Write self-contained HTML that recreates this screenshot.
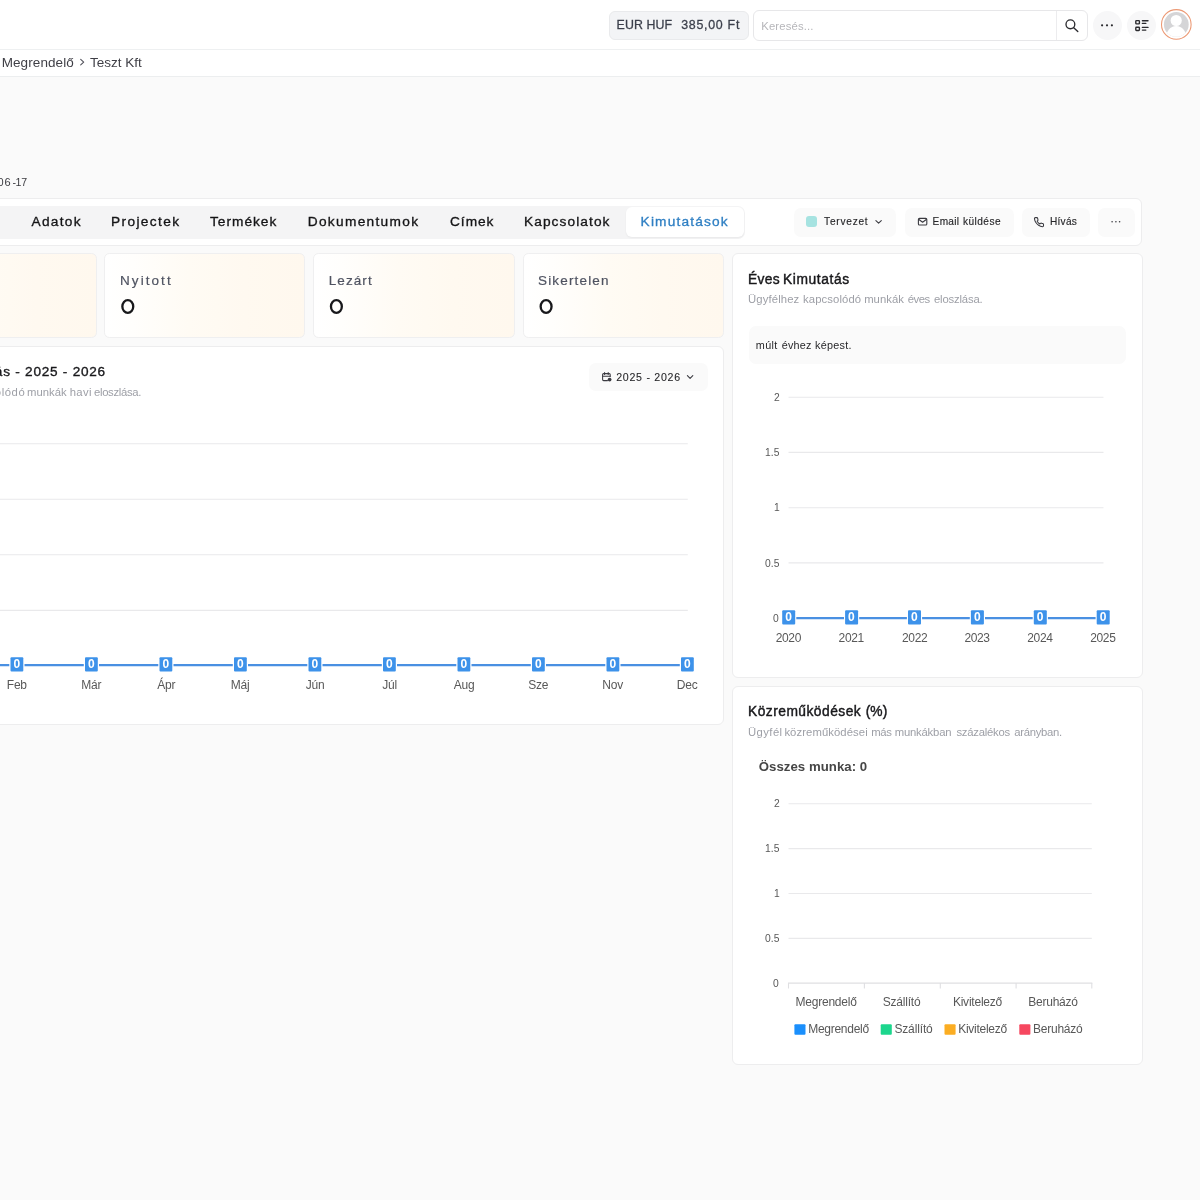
<!DOCTYPE html>
<html lang="hu">
<head>
<meta charset="utf-8">
<title>Teszt Kft</title>
<style>
*{box-sizing:border-box;margin:0;padding:0}
html,body{width:1200px;height:1200px;overflow:hidden;background:#fafafa;font-family:"Liberation Sans",sans-serif;color:#18181b}
.abs{position:absolute}
.t{position:absolute;white-space:nowrap;line-height:1}
#tx{position:absolute;left:0;top:0;width:1200px;height:1200px;will-change:transform}
#hdr{left:0;top:0;width:1200px;height:49.6px;background:#fff;border-bottom:1px solid #eef0f1}
#crumb{left:0;top:49.6px;width:1200px;height:27.6px;background:#fff;border-bottom:1px solid #eceeef}
.card{position:absolute;background:#fff;border:1px solid #ededee;border-radius:6px}
.stat{position:absolute;border:1px solid #efeff0;border-radius:5.5px;background:linear-gradient(90deg,#ffffff 0%,#fffefc 14%,#fffbf4 42%,#fff9f0 70%,#fff8ee 100%)}
.btn{position:absolute;background:#fafafa;border-radius:7px}
#ov{position:absolute;left:0;top:0;width:1200px;height:1200px}
</style>
</head>
<body>
<div id="hdr" class="abs"></div>
<div id="crumb" class="abs"></div>
<!-- header widgets -->
<div class="abs" style="left:608.5px;top:11px;width:140px;height:28.5px;background:#f3f4f6;border:1px solid #e9eaec;border-radius:6px"></div>
<div class="abs" style="left:753px;top:10px;width:334.5px;height:30.5px;background:#fff;border:1px solid #e7e7e9;border-radius:6px"></div>
<div class="abs" style="left:1056px;top:11px;width:1px;height:28.5px;background:#ececee"></div>
<div class="abs" style="left:1092.5px;top:10.8px;width:29px;height:29px;border-radius:50%;background:#f7f7f8"></div>
<div class="abs" style="left:1127px;top:10.8px;width:29px;height:29px;border-radius:50%;background:#f7f7f8"></div>

<!-- tabs bar -->
<div class="card" style="left:-40px;top:198px;width:1182px;height:48px"></div>
<div class="abs" style="left:-30px;top:205.5px;width:775px;height:33.5px;background:#f4f4f5;border-radius:7px"></div>
<div class="abs" style="left:625.7px;top:207px;width:118px;height:30px;background:#fff;border-radius:6px;box-shadow:0 1px 2px rgba(0,0,0,.05)"></div>
<div class="btn" style="left:794px;top:208px;width:102px;height:28.5px"></div>
<div class="btn" style="left:904.5px;top:208px;width:109px;height:28.5px"></div>
<div class="btn" style="left:1022px;top:208px;width:68.3px;height:28.5px"></div>
<div class="btn" style="left:1098px;top:208px;width:36.5px;height:28.5px"></div>
<div class="abs" style="left:806px;top:216.2px;width:11.2px;height:11.2px;border-radius:3px;background:#a6e3e1"></div>

<!-- stat cards -->
<div class="stat" style="left:-104px;top:253.2px;width:201px;height:84.8px"></div>
<div class="stat" style="left:104px;top:253.2px;width:201px;height:84.8px"></div>
<div class="stat" style="left:313px;top:253.2px;width:201.5px;height:84.8px"></div>
<div class="stat" style="left:523px;top:253.2px;width:201px;height:84.8px"></div>

<!-- cards -->
<div class="card" style="left:-40px;top:346px;width:764px;height:379px"></div>
<div class="card" style="left:732px;top:253px;width:410.5px;height:425px"></div>
<div class="card" style="left:732px;top:686px;width:410.5px;height:379px"></div>
<div class="btn" style="left:589px;top:363px;width:119px;height:27.5px"></div>
<div class="abs" style="left:748.5px;top:326px;width:377.5px;height:38px;background:#fafafa;border-radius:7px"></div>

<svg id="ov" viewBox="0 0 1200 1200" fill="none">
<line x1="-60" x2="687.8" y1="443.8" y2="443.8" stroke="#e9e9eb" stroke-width="1.1"/>
<line x1="-60" x2="687.8" y1="499.3" y2="499.3" stroke="#e9e9eb" stroke-width="1.1"/>
<line x1="-60" x2="687.8" y1="554.8" y2="554.8" stroke="#e9e9eb" stroke-width="1.1"/>
<line x1="-60" x2="687.8" y1="610.4" y2="610.4" stroke="#e9e9eb" stroke-width="1.1"/>
<line x1="-60" x2="687.4" y1="665.2" y2="665.2" stroke="#4a90e2" stroke-width="2.25"/>
<rect x="-65.2" y="656.2" width="15.2" height="16.4" rx="2" fill="#fff"/>
<rect x="-64.0" y="657.2" width="12.8" height="14.2" rx="1" fill="#3d92ea"/>
<rect x="9.3" y="656.2" width="15.2" height="16.4" rx="2" fill="#fff"/>
<rect x="10.5" y="657.2" width="12.8" height="14.2" rx="1" fill="#3d92ea"/>
<rect x="83.8" y="656.2" width="15.2" height="16.4" rx="2" fill="#fff"/>
<rect x="85.0" y="657.2" width="12.8" height="14.2" rx="1" fill="#3d92ea"/>
<rect x="158.3" y="656.2" width="15.2" height="16.4" rx="2" fill="#fff"/>
<rect x="159.5" y="657.2" width="12.8" height="14.2" rx="1" fill="#3d92ea"/>
<rect x="232.8" y="656.2" width="15.2" height="16.4" rx="2" fill="#fff"/>
<rect x="234.0" y="657.2" width="12.8" height="14.2" rx="1" fill="#3d92ea"/>
<rect x="307.3" y="656.2" width="15.2" height="16.4" rx="2" fill="#fff"/>
<rect x="308.5" y="657.2" width="12.8" height="14.2" rx="1" fill="#3d92ea"/>
<rect x="381.8" y="656.2" width="15.2" height="16.4" rx="2" fill="#fff"/>
<rect x="383.0" y="657.2" width="12.8" height="14.2" rx="1" fill="#3d92ea"/>
<rect x="456.3" y="656.2" width="15.2" height="16.4" rx="2" fill="#fff"/>
<rect x="457.5" y="657.2" width="12.8" height="14.2" rx="1" fill="#3d92ea"/>
<rect x="530.8" y="656.2" width="15.2" height="16.4" rx="2" fill="#fff"/>
<rect x="532.0" y="657.2" width="12.8" height="14.2" rx="1" fill="#3d92ea"/>
<rect x="605.3" y="656.2" width="15.2" height="16.4" rx="2" fill="#fff"/>
<rect x="606.5" y="657.2" width="12.8" height="14.2" rx="1" fill="#3d92ea"/>
<rect x="679.8" y="656.2" width="15.2" height="16.4" rx="2" fill="#fff"/>
<rect x="681.0" y="657.2" width="12.8" height="14.2" rx="1" fill="#3d92ea"/>
<line x1="788.5" x2="1103.5" y1="397.2" y2="397.2" stroke="#e9e9eb" stroke-width="1.1"/>
<line x1="788.5" x2="1103.5" y1="452.4" y2="452.4" stroke="#e9e9eb" stroke-width="1.1"/>
<line x1="788.5" x2="1103.5" y1="507.7" y2="507.7" stroke="#e9e9eb" stroke-width="1.1"/>
<line x1="788.5" x2="1103.5" y1="562.9" y2="562.9" stroke="#e9e9eb" stroke-width="1.1"/>
<line x1="788.7" x2="1103.2" y1="618.1" y2="618.1" stroke="#4a90e2" stroke-width="2.25"/>
<rect x="781.1" y="609.2" width="15.2" height="16.4" rx="2" fill="#fff"/>
<rect x="782.2" y="610.2" width="13" height="14.2" rx="1" fill="#3d92ea"/>
<rect x="844.0" y="609.2" width="15.2" height="16.4" rx="2" fill="#fff"/>
<rect x="845.1" y="610.2" width="13" height="14.2" rx="1" fill="#3d92ea"/>
<rect x="906.9" y="609.2" width="15.2" height="16.4" rx="2" fill="#fff"/>
<rect x="908.0" y="610.2" width="13" height="14.2" rx="1" fill="#3d92ea"/>
<rect x="969.8" y="609.2" width="15.2" height="16.4" rx="2" fill="#fff"/>
<rect x="970.9" y="610.2" width="13" height="14.2" rx="1" fill="#3d92ea"/>
<rect x="1032.7" y="609.2" width="15.2" height="16.4" rx="2" fill="#fff"/>
<rect x="1033.8" y="610.2" width="13" height="14.2" rx="1" fill="#3d92ea"/>
<rect x="1095.6" y="609.2" width="15.2" height="16.4" rx="2" fill="#fff"/>
<rect x="1096.7" y="610.2" width="13" height="14.2" rx="1" fill="#3d92ea"/>
<line x1="788.5" x2="1091.8" y1="803.7" y2="803.7" stroke="#e9e9eb" stroke-width="1.1"/>
<line x1="788.5" x2="1091.8" y1="848.6" y2="848.6" stroke="#e9e9eb" stroke-width="1.1"/>
<line x1="788.5" x2="1091.8" y1="893.5" y2="893.5" stroke="#e9e9eb" stroke-width="1.1"/>
<line x1="788.5" x2="1091.8" y1="938.4" y2="938.4" stroke="#e9e9eb" stroke-width="1.1"/>
<line x1="788" x2="1092.3" y1="983.1" y2="983.1" stroke="#dfdfe2" stroke-width="1.1"/>
<line x1="788.5" x2="788.5" y1="983.1" y2="988.5" stroke="#dfdfe2" stroke-width="1.1"/>
<line x1="864.4" x2="864.4" y1="983.1" y2="988.5" stroke="#dfdfe2" stroke-width="1.1"/>
<line x1="940.3" x2="940.3" y1="983.1" y2="988.5" stroke="#dfdfe2" stroke-width="1.1"/>
<line x1="1016.1" x2="1016.1" y1="983.1" y2="988.5" stroke="#dfdfe2" stroke-width="1.1"/>
<line x1="1091.8" x2="1091.8" y1="983.1" y2="988.5" stroke="#dfdfe2" stroke-width="1.1"/>
<rect x="794.4" y="1024.2" width="11.1" height="10.6" rx="1" fill="#1a8ffc"/>
<rect x="880.7" y="1024.2" width="11.1" height="10.6" rx="1" fill="#1cd68d"/>
<rect x="944.5" y="1024.2" width="11.1" height="10.6" rx="1" fill="#fbad22"/>
<rect x="1019.3" y="1024.2" width="11.1" height="10.6" rx="1" fill="#f6475f"/>
<ellipse cx="127.8" cy="306.5" rx="5.45" ry="6.45" stroke="#18181b" stroke-width="2.3"/>
<ellipse cx="336.4" cy="306.5" rx="5.45" ry="6.45" stroke="#18181b" stroke-width="2.3"/>
<ellipse cx="546.1" cy="306.5" rx="5.45" ry="6.45" stroke="#18181b" stroke-width="2.3"/>
<path d="M80.7 59.3 L83.7 62.1 L80.7 64.9" stroke="#52525b" stroke-width="1.1" stroke-linecap="round" stroke-linejoin="round"/>
<circle cx="1070.4" cy="24.3" r="4.4" stroke="#2b2b2f" stroke-width="1.35"/><path d="M1073.7 27.7 L1077.8 31.6" stroke="#2b2b2f" stroke-width="1.35" stroke-linecap="round"/>
<circle cx="1102.1" cy="25.3" r="1.1" fill="#2b2b2f"/>
<circle cx="1107" cy="25.3" r="1.1" fill="#2b2b2f"/>
<circle cx="1111.9" cy="25.3" r="1.1" fill="#2b2b2f"/>
<g stroke="#2b2b2f" stroke-width="1.4" stroke-linecap="round"><rect x="1135.8" y="20.6" width="3.6" height="3.3" rx=".7"/><rect x="1135.8" y="27.2" width="3.6" height="3.3" rx=".7"/><path d="M1142.4 20.7 H1148 M1142.4 23.4 H1145.8 M1142.4 27.4 H1148 M1142.4 30.1 H1145.8"/></g>
<circle cx="1176.3" cy="24.4" r="14.8" fill="#fff" stroke="#ec9873" stroke-width="1.05"/>
<clipPath id="av"><circle cx="1176.3" cy="24.4" r="12.4"/></clipPath>
<g clip-path="url(#av)"><rect x="1160" y="10" width="34" height="30" fill="#d5d5d7"/><circle cx="1176.2" cy="20.5" r="5.6" fill="#fff"/><ellipse cx="1176.2" cy="38.3" rx="10.6" ry="12.2" fill="#fff"/></g>
<path d="M875.9 220.6 L878.6 223.2 L881.3 220.6" stroke="#3a3a40" stroke-width="1.1" stroke-linecap="round" stroke-linejoin="round"/>
<rect x="918.4" y="218.4" width="8.4" height="6.6" rx="1.1" stroke="#3a3a40" stroke-width="1.1"/><path d="M918.6 219.3 L922.6 222.2 L926.6 219.3" stroke="#3a3a40" stroke-width="1.1" stroke-linejoin="round"/>
<g transform="translate(1033.5 216.7) scale(0.455)" stroke="#3a3a40" stroke-width="2.3" stroke-linecap="round" stroke-linejoin="round"><path d="M22 16.92v3a2 2 0 0 1-2.18 2 19.79 19.79 0 0 1-8.63-3.07 19.5 19.5 0 0 1-6-6 19.79 19.79 0 0 1-3.07-8.67A2 2 0 0 1 4.11 2h3a2 2 0 0 1 2 1.72 12.84 12.84 0 0 0 .7 2.81 2 2 0 0 1-.45 2.11L8.09 9.91a16 16 0 0 0 6 6l1.27-1.27a2 2 0 0 1 2.11-.45 12.84 12.84 0 0 0 2.81.7A2 2 0 0 1 22 16.92z"/></g>
<circle cx="1112.1" cy="221.8" r=".8" fill="#3a3a40"/>
<circle cx="1115.9" cy="221.8" r=".8" fill="#3a3a40"/>
<circle cx="1119.6" cy="221.8" r=".8" fill="#3a3a40"/>
<g stroke="#3a3a40" stroke-width="1.05" stroke-linecap="round"><path d="M607.5 380.6 H603.6 a1 1 0 0 1 -1 -1 V374.6 a1 1 0 0 1 1 -1 H609.2 a1 1 0 0 1 1 1 V376.6"/><path d="M604.6 372.4 V374.4 M608.2 372.4 V374.4 M602.8 376.3 H610"/></g><circle cx="609.6" cy="379.6" r="1.9" fill="#3a3a40"/>
<path d="M687.4 375.7 L690.1 378.3 L692.8 375.7" stroke="#3a3a40" stroke-width="1.1" stroke-linecap="round" stroke-linejoin="round"/>
</svg>
<div id="tx">
<span class="t" id="t0" style="left:616.60px;top:19.20px;font-size:12.4px;color:#3b3f4b;letter-spacing:0.067px;-webkit-text-stroke:0.28px #3b3f4b;">EUR HUF</span>
<span class="t" id="t1" style="left:681.20px;top:19.20px;font-size:12.4px;color:#3b3f4b;letter-spacing:0.725px;-webkit-text-stroke:0.28px #3b3f4b;">385,00 Ft</span>
<span class="t" id="t2" style="left:761.20px;top:21.00px;font-size:11.3px;color:#b6b6ba;letter-spacing:0.156px;">Keresés...</span>
<span class="t" id="t3" style="left:1.70px;top:55.60px;font-size:13.5px;color:#3f3f46;letter-spacing:0.089px;">Megrendelő</span>
<span class="t" id="t4" style="left:90.00px;top:55.60px;font-size:13.5px;color:#3f3f46;">Teszt Kft</span>
<span class="t" id="t5" style="left:4.50px;top:177.00px;font-size:11px;color:#3a3a3f;">6</span>
<span class="t" id="t6" style="left:12.50px;top:177.00px;font-size:10.6px;color:#3a3a3f;">-</span>
<span class="t" id="t7" style="left:15.50px;top:177.00px;font-size:10.6px;color:#3a3a3f;">1</span>
<span class="t" id="t8" style="left:21.30px;top:177.00px;font-size:10.6px;color:#3a3a3f;">7</span>
<span class="t" id="t9" style="left:-31.70px;top:177.00px;font-size:10.5px;color:#3a3a3f;letter-spacing:0.500px;">2025-0</span>
<span class="t" id="t10" style="left:31.50px;top:214.80px;font-size:13.7px;color:#141416;letter-spacing:1.300px;-webkit-text-stroke:0.33px #141416;">Adatok</span>
<span class="t" id="t11" style="left:111.00px;top:214.80px;font-size:13.7px;color:#141416;letter-spacing:1.375px;-webkit-text-stroke:0.33px #141416;">Projectek</span>
<span class="t" id="t12" style="left:210.00px;top:214.80px;font-size:13.7px;color:#141416;letter-spacing:1.000px;-webkit-text-stroke:0.33px #141416;">Termékek</span>
<span class="t" id="t13" style="left:307.70px;top:214.80px;font-size:13.7px;color:#141416;letter-spacing:1.318px;-webkit-text-stroke:0.33px #141416;">Dokumentumok</span>
<span class="t" id="t14" style="left:450.00px;top:214.80px;font-size:13.7px;color:#141416;letter-spacing:0.975px;-webkit-text-stroke:0.33px #141416;">Címek</span>
<span class="t" id="t15" style="left:524.00px;top:214.80px;font-size:13.7px;color:#141416;letter-spacing:1.090px;-webkit-text-stroke:0.33px #141416;">Kapcsolatok</span>
<span class="t" id="t16" style="left:640.60px;top:214.80px;font-size:13.7px;color:#2f7fc3;letter-spacing:1.170px;-webkit-text-stroke:0.33px #2f7fc3;">Kimutatások</span>
<span class="t" id="t17" style="left:824.10px;top:217.40px;font-size:10.1px;color:#27272a;letter-spacing:0.771px;-webkit-text-stroke:0.15px #27272a;">Tervezet</span>
<span class="t" id="t18" style="left:932.60px;top:217.30px;font-size:10.1px;color:#27272a;letter-spacing:0.300px;-webkit-text-stroke:0.15px #27272a;">Email</span>
<span class="t" id="t19" style="left:963.00px;top:217.30px;font-size:10.1px;color:#27272a;letter-spacing:0.450px;-webkit-text-stroke:0.15px #27272a;">küldése</span>
<span class="t" id="t20" style="left:1049.90px;top:217.20px;font-size:10.1px;color:#27272a;letter-spacing:0.300px;-webkit-text-stroke:0.15px #27272a;">Hívás</span>
<span class="t" id="t21" style="left:120.00px;top:273.60px;font-size:13.5px;color:#4f5361;letter-spacing:2.067px;-webkit-text-stroke:0.2px #4f5361;">Nyitott</span>
<span class="t" id="t22" style="left:328.70px;top:273.60px;font-size:13.5px;color:#4f5361;letter-spacing:1.100px;-webkit-text-stroke:0.2px #4f5361;">Lezárt</span>
<span class="t" id="t23" style="left:538.00px;top:273.60px;font-size:13.5px;color:#4f5361;letter-spacing:1.167px;-webkit-text-stroke:0.2px #4f5361;">Sikertelen</span>
<span class="t" id="t24" style="left:15.30px;top:365.30px;font-size:13.6px;color:#18181b;letter-spacing:0.750px;-webkit-text-stroke:0.35px #18181b;">- 2025 - 2026</span>
<span class="t" id="t25" style="left:-93.00px;top:365.30px;font-size:13.6px;color:#18181b;letter-spacing:0.900px;-webkit-text-stroke:0.35px #18181b;">Havi Kimutatás</span>
<span class="t" id="t26" style="left:27.00px;top:386.80px;font-size:11.3px;color:#9d9fa6;letter-spacing:0.020px;">munkák</span>
<span class="t" id="t27" style="left:69.70px;top:386.80px;font-size:11.3px;color:#9d9fa6;letter-spacing:0.333px;">havi</span>
<span class="t" id="t28" style="left:94.00px;top:386.80px;font-size:11.3px;color:#9d9fa6;letter-spacing:-0.322px;">eloszlása.</span>
<span class="t" id="t29" style="left:-96.30px;top:386.80px;font-size:11.3px;color:#9d9fa6;letter-spacing:0.550px;">Ügyfélhez kapcsolódó</span>
<span class="t" id="t30" style="left:616.20px;top:371.70px;font-size:10.6px;color:#27272a;letter-spacing:0.740px;-webkit-text-stroke:0.1px #27272a;">2025 - 2026</span>
<span class="t" id="t31" style="left:6.80px;top:678.70px;font-size:12px;color:#585858;letter-spacing:-0.220px;">Feb</span>
<span class="t" id="t32" style="left:13.40px;top:658.30px;font-size:12px;color:#fff;font-weight:700;">0</span>
<span class="t" id="t33" style="left:81.30px;top:678.70px;font-size:12px;color:#585858;letter-spacing:-0.220px;">Már</span>
<span class="t" id="t34" style="left:87.90px;top:658.30px;font-size:12px;color:#fff;font-weight:700;">0</span>
<span class="t" id="t35" style="left:157.30px;top:678.70px;font-size:12px;color:#585858;letter-spacing:-0.220px;">Ápr</span>
<span class="t" id="t36" style="left:162.40px;top:658.30px;font-size:12px;color:#fff;font-weight:700;">0</span>
<span class="t" id="t37" style="left:230.80px;top:678.70px;font-size:12px;color:#585858;letter-spacing:-0.220px;">Máj</span>
<span class="t" id="t38" style="left:236.90px;top:658.30px;font-size:12px;color:#fff;font-weight:700;">0</span>
<span class="t" id="t39" style="left:305.80px;top:678.70px;font-size:12px;color:#585858;letter-spacing:-0.220px;">Jún</span>
<span class="t" id="t40" style="left:311.40px;top:658.30px;font-size:12px;color:#fff;font-weight:700;">0</span>
<span class="t" id="t41" style="left:382.30px;top:678.70px;font-size:12px;color:#585858;letter-spacing:-0.220px;">Júl</span>
<span class="t" id="t42" style="left:385.90px;top:658.30px;font-size:12px;color:#fff;font-weight:700;">0</span>
<span class="t" id="t43" style="left:453.80px;top:678.70px;font-size:12px;color:#585858;letter-spacing:-0.220px;">Aug</span>
<span class="t" id="t44" style="left:460.40px;top:658.30px;font-size:12px;color:#fff;font-weight:700;">0</span>
<span class="t" id="t45" style="left:528.30px;top:678.70px;font-size:12px;color:#585858;letter-spacing:-0.220px;">Sze</span>
<span class="t" id="t46" style="left:534.90px;top:658.30px;font-size:12px;color:#fff;font-weight:700;">0</span>
<span class="t" id="t47" style="left:602.30px;top:678.70px;font-size:12px;color:#585858;letter-spacing:-0.220px;">Nov</span>
<span class="t" id="t48" style="left:609.40px;top:658.30px;font-size:12px;color:#fff;font-weight:700;">0</span>
<span class="t" id="t49" style="left:676.80px;top:678.70px;font-size:12px;color:#585858;letter-spacing:-0.220px;">Dec</span>
<span class="t" id="t50" style="left:683.90px;top:658.30px;font-size:12px;color:#fff;font-weight:700;">0</span>
<span class="t" id="t51" style="left:748.00px;top:272.80px;font-size:13.8px;color:#18181b;letter-spacing:0.333px;-webkit-text-stroke:0.42px #18181b;">Éves</span>
<span class="t" id="t52" style="left:783.00px;top:272.80px;font-size:13.8px;color:#18181b;letter-spacing:0.600px;-webkit-text-stroke:0.42px #18181b;">Kimutatás</span>
<span class="t" id="t53" style="left:748.00px;top:293.90px;font-size:11.3px;color:#9d9fa6;letter-spacing:0.125px;">Ügyfélhez</span>
<span class="t" id="t54" style="left:803.00px;top:293.90px;font-size:11.3px;color:#9d9fa6;letter-spacing:0.111px;">kapcsolódó</span>
<span class="t" id="t55" style="left:864.20px;top:293.90px;font-size:11.3px;color:#9d9fa6;letter-spacing:0.020px;">munkák</span>
<span class="t" id="t56" style="left:907.70px;top:293.90px;font-size:11.3px;color:#9d9fa6;letter-spacing:-0.467px;">éves</span>
<span class="t" id="t57" style="left:934.00px;top:293.90px;font-size:11.3px;color:#9d9fa6;letter-spacing:-0.178px;">eloszlása.</span>
<span class="t" id="t58" style="left:755.80px;top:339.90px;font-size:10.8px;color:#27272a;letter-spacing:0.367px;">múlt</span>
<span class="t" id="t59" style="left:781.80px;top:339.90px;font-size:10.8px;color:#27272a;letter-spacing:0.175px;">évhez</span>
<span class="t" id="t60" style="left:815.00px;top:339.90px;font-size:10.8px;color:#27272a;letter-spacing:0.267px;">képest.</span>
<span class="t" id="t61" style="left:774.10px;top:392.90px;font-size:10.3px;color:#585858;">2</span>
<span class="t" id="t62" style="left:765.10px;top:448.10px;font-size:10.3px;color:#585858;">1.5</span>
<span class="t" id="t63" style="left:774.10px;top:503.40px;font-size:10.3px;color:#585858;">1</span>
<span class="t" id="t64" style="left:765.10px;top:558.60px;font-size:10.3px;color:#585858;">0.5</span>
<span class="t" id="t65" style="left:773.10px;top:614.00px;font-size:10.3px;color:#585858;">0</span>
<span class="t" id="t66" style="left:775.70px;top:631.90px;font-size:12px;color:#585858;letter-spacing:-0.350px;">2020</span>
<span class="t" id="t67" style="left:785.20px;top:611.30px;font-size:12px;color:#fff;font-weight:700;">0</span>
<span class="t" id="t68" style="left:838.60px;top:631.90px;font-size:12px;color:#585858;letter-spacing:-0.350px;">2021</span>
<span class="t" id="t69" style="left:848.10px;top:611.30px;font-size:12px;color:#fff;font-weight:700;">0</span>
<span class="t" id="t70" style="left:902.00px;top:631.90px;font-size:12px;color:#585858;letter-spacing:-0.350px;">2022</span>
<span class="t" id="t71" style="left:911.00px;top:611.30px;font-size:12px;color:#fff;font-weight:700;">0</span>
<span class="t" id="t72" style="left:964.40px;top:631.90px;font-size:12px;color:#585858;letter-spacing:-0.350px;">2023</span>
<span class="t" id="t73" style="left:973.90px;top:611.30px;font-size:12px;color:#fff;font-weight:700;">0</span>
<span class="t" id="t74" style="left:1027.30px;top:631.90px;font-size:12px;color:#585858;letter-spacing:-0.350px;">2024</span>
<span class="t" id="t75" style="left:1036.80px;top:611.30px;font-size:12px;color:#fff;font-weight:700;">0</span>
<span class="t" id="t76" style="left:1090.20px;top:631.90px;font-size:12px;color:#585858;letter-spacing:-0.350px;">2025</span>
<span class="t" id="t77" style="left:1099.70px;top:611.30px;font-size:12px;color:#fff;font-weight:700;">0</span>
<span class="t" id="t78" style="left:748.00px;top:705.30px;font-size:13.8px;color:#18181b;letter-spacing:0.469px;-webkit-text-stroke:0.42px #18181b;">Közreműködések</span>
<span class="t" id="t79" style="left:865.70px;top:705.30px;font-size:13.8px;color:#18181b;letter-spacing:0.050px;-webkit-text-stroke:0.42px #18181b;">(%)</span>
<span class="t" id="t80" style="left:748.00px;top:726.80px;font-size:11.3px;color:#9d9fa6;letter-spacing:0.420px;">Ügyfél</span>
<span class="t" id="t81" style="left:784.40px;top:726.80px;font-size:11.3px;color:#9d9fa6;letter-spacing:0.077px;">közreműködései</span>
<span class="t" id="t82" style="left:871.30px;top:726.80px;font-size:11.3px;color:#9d9fa6;letter-spacing:-0.400px;">más</span>
<span class="t" id="t83" style="left:894.70px;top:726.80px;font-size:11.3px;color:#9d9fa6;letter-spacing:-0.200px;">munkákban</span>
<span class="t" id="t84" style="left:956.40px;top:726.80px;font-size:11.3px;color:#9d9fa6;letter-spacing:-0.244px;">százalékos</span>
<span class="t" id="t85" style="left:1014.20px;top:726.80px;font-size:11.3px;color:#9d9fa6;letter-spacing:-0.275px;">arányban.</span>
<span class="t" id="t86" style="left:758.80px;top:759.90px;font-size:13.2px;color:#464646;font-weight:700;letter-spacing:0.043px;">Összes munka: 0</span>
<span class="t" id="t87" style="left:774.10px;top:799.40px;font-size:10.3px;color:#585858;">2</span>
<span class="t" id="t88" style="left:765.10px;top:844.30px;font-size:10.3px;color:#585858;">1.5</span>
<span class="t" id="t89" style="left:774.10px;top:889.20px;font-size:10.3px;color:#585858;">1</span>
<span class="t" id="t90" style="left:765.10px;top:934.10px;font-size:10.3px;color:#585858;">0.5</span>
<span class="t" id="t91" style="left:773.10px;top:978.80px;font-size:10.3px;color:#585858;">0</span>
<span class="t" id="t92" style="left:795.50px;top:995.50px;font-size:12px;color:#585858;letter-spacing:-0.220px;">Megrendelő</span>
<span class="t" id="t93" style="left:882.80px;top:995.50px;font-size:12px;color:#585858;letter-spacing:-0.220px;">Szállító</span>
<span class="t" id="t94" style="left:952.90px;top:995.50px;font-size:12px;color:#585858;letter-spacing:-0.220px;">Kivitelező</span>
<span class="t" id="t95" style="left:1028.20px;top:995.50px;font-size:12px;color:#585858;letter-spacing:-0.220px;">Beruházó</span>
<span class="t" id="t96" style="left:808.20px;top:1023.20px;font-size:12px;color:#585858;letter-spacing:-0.267px;">Megrendelő</span>
<span class="t" id="t97" style="left:894.40px;top:1023.20px;font-size:12px;color:#585858;letter-spacing:-0.143px;">Szállító</span>
<span class="t" id="t98" style="left:958.20px;top:1023.20px;font-size:12px;color:#585858;letter-spacing:-0.267px;">Kivitelező</span>
<span class="t" id="t99" style="left:1032.90px;top:1023.20px;font-size:12px;color:#585858;letter-spacing:-0.214px;">Beruházó</span>
</div>
</body>
</html>
